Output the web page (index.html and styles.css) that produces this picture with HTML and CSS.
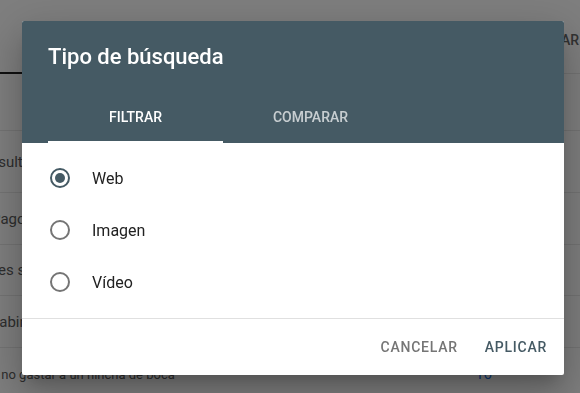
FILE: index.html
```html
<!DOCTYPE html>
<html lang="es">
<head>
  <meta charset="UTF-8" />
  <meta name="viewport" content="width=device-width, initial-scale=1.0" />
  <title>Tipo de búsqueda</title>
  <link rel="stylesheet" href="styles.css">
</head>

<body>
  <!-- Page behind the dialog -->
  <div class="page">
    <div class="page-tabs">
      <span class="page-tab active"></span>
      <span class="page-tab-label">COMPARAR</span>
    </div>
    <div class="table-head"></div>
    <div class="row first"><span class="q q1">Resultados de búsqueda</span></div>
    <div class="row"><span class="q q2">Pagos</span></div>
    <div class="row short"><span class="q q3">Partidos es sábado</span></div>
    <div class="row"><span class="q q4">Gabinete</span></div>
    <div class="row"><span class="q q5">cómo no gastar a un hincha de boca</span><span class="num">16</span></div>
  </div>

  <div class="scrim"></div>

  <!-- Dialog -->
  <div class="dialog">
    <div class="dialog-header">
      <h2>Tipo de búsqueda</h2>
      <div class="tabs">
        <div class="tab selected">FILTRAR</div>
        <div class="tab">COMPARAR</div>
      </div>
    </div>

    <div class="dialog-body">
      <label class="option">
        <span class="radio checked"></span>
        <span>Web</span>
      </label>
      <label class="option">
        <span class="radio"></span>
        <span>Imagen</span>
      </label>
      <label class="option">
        <span class="radio"></span>
        <span>Vídeo</span>
      </label>
    </div>

    <div class="dialog-actions">
      <button class="btn cancel">CANCELAR</button>
      <button class="btn apply">APLICAR</button>
    </div>
  </div>
</body>
</html>
```

FILE: styles.css
```css
:root {
  --primary: #455a64;
  --text: #212121;
  --muted: #757575;
  --divider: #e0e0e0;
}

* {
  box-sizing: border-box;
}

body {
  margin: 0;
  width: 580px;
  height: 393px;
  overflow: hidden;
  font-family: Roboto, 'Liberation Sans', sans-serif;
  background: #ffffff;
  color: var(--text);
}

/* background page */
.page {
  width: 580px;
}

.page-tabs {
  height: 74px;
  display: flex;
  align-items: flex-start;
  justify-content: flex-end;
  padding-top: 32px;
  border-bottom: 1px solid #e8e8e8;
  position: relative;
}

.page-tab.active {
  position: absolute;
  left: 0;
  bottom: -1px;
  width: 200px;
  height: 2px;
  background: #202020;
}

.page-tab-label {
  font-size: 14px;
  font-weight: 500;
  color: #666;
  margin-right: 1px;
}

.table-head {
  height: 57px;
  border-bottom: 1px solid #e8e8e8;
}

.row {
  height: 52px;
  display: flex;
  align-items: center;
  border-bottom: 1px solid #e8e8e8;
  font-size: 15px;
  color: #5c5c5c;
  white-space: nowrap;
}

.row.first {
  height: 62px;
}

.row.short {
  height: 51px;
}

.q1 { margin-left: -19px; }
.q2 { margin-left: -9px; }
.q3 { margin-left: -62px; }
.q4 { margin-left: -11px; }
.q5 { margin-left: -35px; padding-top: 2px; font-size: 13px; }

.num {
  margin-left: auto;
  margin-right: 88px;
  color: #1a73e8;
}

.scrim {
  position: fixed;
  inset: 0;
  background: rgba(0, 0, 0, 0.5);
}

/* dialog */
.dialog {
  position: absolute;
  left: 22px;
  top: 21px;
  width: 542px;
  background: #ffffff;
  border-radius: 2px;
  overflow: hidden;
  box-shadow: 0 11px 15px -7px rgba(0, 0, 0, 0.2),
              0 24px 38px 3px rgba(0, 0, 0, 0.14),
              0 9px 46px 8px rgba(0, 0, 0, 0.12);
}

.dialog-header {
  background: var(--primary);
  padding: 24px 26px 0;
}

.dialog-header h2 {
  margin: 0 0 26px;
  font-size: 22px;
  line-height: 24px;
  font-weight: 500;
  color: #ffffff;
}

.tabs {
  display: flex;
  height: 48px;
}

.tab {
  width: 175px;
  display: flex;
  align-items: center;
  justify-content: center;
  padding-bottom: 4px;
  font-size: 14px;
  font-weight: 500;
  color: rgba(255, 255, 255, 0.7);
  position: relative;
}

.tab.selected {
  color: #ffffff;
}

.tab.selected::after {
  content: "";
  position: absolute;
  left: 0;
  right: 0;
  bottom: 0;
  height: 2px;
  background: #ffffff;
}

.dialog-body {
  padding: 9px 28px 10px;
  border-bottom: 1px solid var(--divider);
}

.option {
  height: 52px;
  display: flex;
  align-items: center;
  gap: 22px;
  font-size: 16px;
  color: var(--text);
}

.radio {
  width: 20px;
  height: 20px;
  border: 2px solid var(--muted);
  border-radius: 50%;
  display: flex;
  align-items: center;
  justify-content: center;
}

.radio.checked {
  border-color: var(--primary);
}

.radio.checked::after {
  content: "";
  width: 10px;
  height: 10px;
  border-radius: 50%;
  background: var(--primary);
}

.dialog-actions {
  height: 56px;
  display: flex;
  align-items: center;
  justify-content: flex-end;
  gap: 11px;
  padding-right: 10px;
}

.btn {
  background: none;
  border: none;
  padding: 0 8px;
  height: 36px;
  font-family: inherit;
  font-size: 14px;
  font-weight: 500;
  letter-spacing: 0.75px;
  cursor: pointer;
}

.btn.cancel {
  color: var(--muted);
}

.btn.apply {
  color: var(--primary);
  margin-right: -1px;
}
```
